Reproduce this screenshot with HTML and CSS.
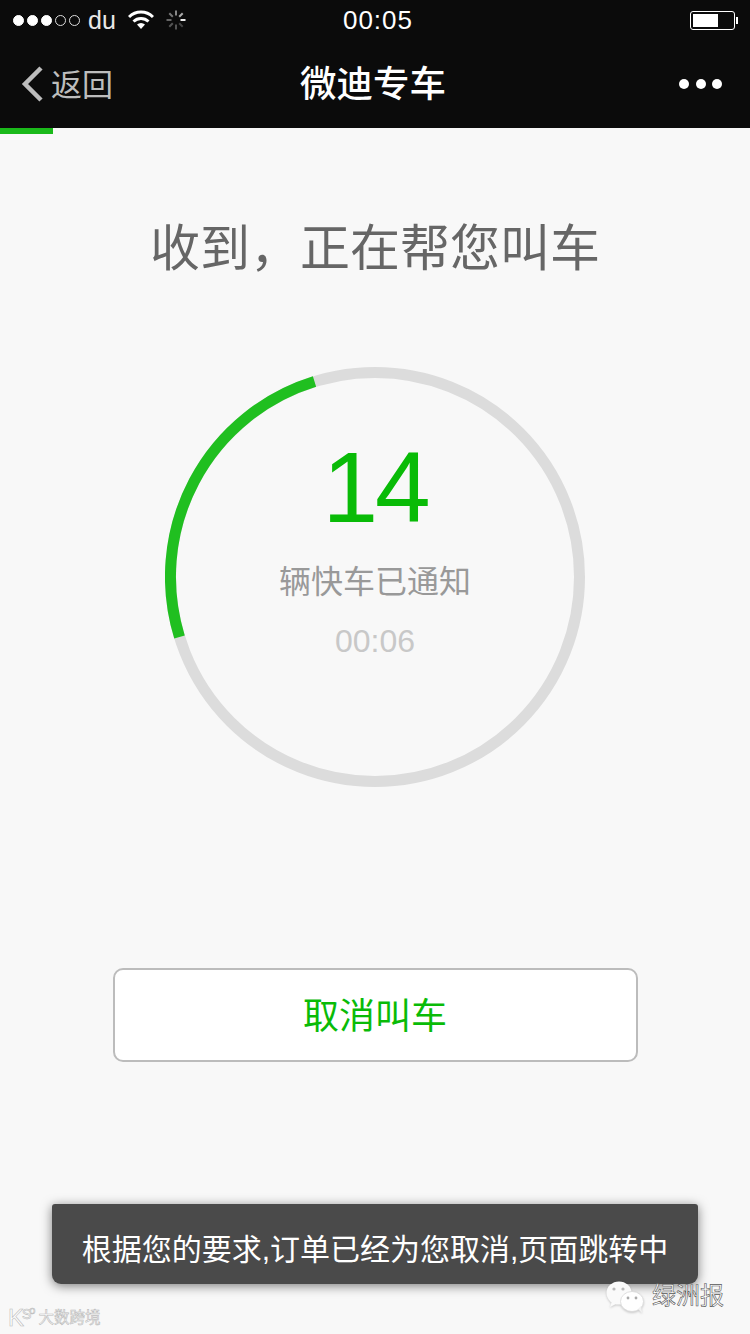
FILE: index.html
```html
<!DOCTYPE html>
<html lang="zh-CN">

<head>
    <meta charset="UTF-8">
    <meta name="viewport" content="width=device-width, initial-scale=1.0">
    <title>微迪专车</title>
    <link rel="stylesheet" href="styles.css">
</head>

<body>
    <div class="phone">
        <!-- Status bar -->
        <div class="status-bar">
            <div class="status-left">
                <div class="signal">
                    <span class="dot on"></span>
                    <span class="dot on"></span>
                    <span class="dot on"></span>
                    <span class="dot"></span>
                    <span class="dot"></span>
                </div>
                <span class="carrier">du</span>
                <svg class="wifi" width="26" height="20" viewBox="0 0 26 20">
                    <path d="M1 7 A17 17 0 0 1 25 7" fill="none" stroke="#fff" stroke-width="3" />
                    <path d="M5.5 11.5 A11 11 0 0 1 20.500 11.500" fill="none" stroke="#fff" stroke-width="3" />
                    <path d="M9 14.5 A6 6 0 0 1 17 14.500 L13 19 Z" fill="#fff" />
                </svg>
                <svg class="spinner" width="20" height="20" viewBox="0 0 20 20" stroke-width="2">
                    <path d="M10 0.500 V5.500" stroke="#888" />
                    <path d="M16.700 3.300 L13.200 6.800" stroke="#aaa" />
                    <path d="M19.500 10 H14.500" stroke="#eee" />
                    <path d="M16.700 16.700 L13.200 13.200" stroke="#444" />
                    <path d="M10 19.500 V14.500" stroke="#555" />
                    <path d="M3.300 16.700 L6.800 13.200" stroke="#555" />
                    <path d="M0.500 10 H5.500" stroke="#666" />
                    <path d="M3.300 3.300 L6.800 6.800" stroke="#777" />
                </svg>
            </div>
            <div class="clock">00:05</div>
            <div class="battery">
                <div class="battery-body">
                    <div class="battery-level"></div>
                </div>
                <div class="battery-nub"></div>
            </div>
        </div>

        <!-- Navigation bar -->
        <div class="nav-bar">
            <div class="back">
                <svg width="24" height="36" viewBox="0 0 24 36">
                    <path d="M20 2 L4 18 L20 34" fill="none" stroke="#bdbdbd" stroke-width="4.500" />
                </svg>
                <span class="back-text">返回</span>
            </div>
            <div class="nav-title">微迪专车</div>
            <div class="more">
                <span></span>
                <span></span>
                <span></span>
            </div>
        </div>
        <div class="progress">
            <div class="progress-fill"></div>
        </div>

        <!-- Main content -->
        <h1 class="headline">收到，正在帮您叫车</h1>

        <div class="ring">
            <svg class="ring-art" width="420" height="420" viewBox="0 0 420 420">
                <circle cx="210" cy="210" r="204.500" fill="none" stroke="#dcdcdc" stroke-width="11" />
                <path d="M14.500 270 A204.500 204.500 0 0 1 149.500 14.500" fill="none" stroke="#20bf20" stroke-width="11" />
            </svg>
            <div class="count">14</div>
            <div class="count-label">辆快车已通知</div>
            <div class="elapsed">00:06</div>
        </div>

        <button class="cancel-btn">取消叫车</button>

        <!-- Toast -->
        <div class="toast">根据您的要求,订单已经为您取消,页面跳转中</div>

        <!-- Watermarks -->
        <div class="mark-left">
            <span class="mark-logo">K<span class="mark-s">S</span><span class="mark-o">o</span></span>
            <span class="mark-name">大数跨境</span>
        </div>
        <div class="mark-right">
            <svg class="mark-icon" width="38" height="32" viewBox="0 0 38 32">
                <ellipse cx="13" cy="12" rx="12.500" ry="11.500" fill="#fafafa" />
                <path d="M6 20 L4 26 L12 22 Z" fill="#fafafa" />
                <ellipse cx="26" cy="20.500" rx="11.500" ry="10" fill="#fff" stroke="#d8d8d8" stroke-width="0.800" />
                <path d="M32 28 L36 32 L35 25 Z" fill="#f2f2f2" />
                <circle cx="8" cy="8" r="1.600" fill="#bbb" />
                <circle cx="17" cy="8" r="1.600" fill="#bbb" />
                <circle cx="22" cy="17" r="1.400" fill="#aaa" />
                <circle cx="30" cy="17" r="1.400" fill="#aaa" />
            </svg>
            <span class="mark-title">绿洲报</span>
        </div>
    </div>
</body>

</html>
```

FILE: styles.css
```css
/* Basic page setup */
html,
body {
    margin: 0;
    padding: 0;
}

body {
    font-family: "Liberation Sans", "Noto Sans CJK SC", sans-serif;
    background-color: #f8f8f8;
}

.phone {
    position: relative;
    width: 750px;
    height: 1334px;
    overflow: hidden;
    display: flex;
    flex-direction: column;
    align-items: center;
}

/* Status bar */
.status-bar {
    width: 100%;
    height: 40px;
    box-sizing: border-box;
    padding: 0 12px 0 13px;
    background-color: #0b0b0b;
    color: #fff;
    display: grid;
    grid-template-columns: 1fr auto 1fr;
    align-items: center;
}

.status-left {
    display: flex;
    align-items: center;
}

.signal {
    display: flex;
    gap: 3px;
}

.dot {
    width: 11px;
    height: 11px;
    box-sizing: border-box;
    border: 1px solid #ddd;
    border-radius: 50%;
}

.dot.on {
    background-color: #fff;
    border-color: #fff;
}

.carrier {
    font-size: 25px;
    margin-left: 8px;
    color: #e8e8e8;
}

.wifi {
    margin-left: 12px;
}

.spinner {
    margin-left: 12px;
}

.clock {
    font-size: 26px;
    letter-spacing: 1px;
    margin-left: 5px;
}

.battery {
    justify-self: end;
    display: flex;
    align-items: center;
    gap: 1px;
}

.battery-body {
    width: 45px;
    height: 19px;
    box-sizing: border-box;
    padding: 2px;
    border: 1px solid #fff;
    border-radius: 3px;
}

.battery-level {
    width: 25px;
    height: 100%;
    background-color: #fff;
}

.battery-nub {
    width: 2px;
    height: 7px;
    background-color: #fff;
}

/* Navigation bar */
.nav-bar {
    width: 100%;
    height: 88px;
    box-sizing: border-box;
    padding: 0 28px 0 21px;
    background-color: #0b0b0b;
    display: grid;
    grid-template-columns: 1fr auto 1fr;
    align-items: center;
}

.back {
    display: flex;
    align-items: center;
    gap: 6px;
    font-size: 31px;
    color: #bdbdbd;
}

.back-text {
    padding-bottom: 4px;
}

.nav-title {
    font-size: 36.500px;
    font-weight: 500;
    color: #fff;
    margin-left: 3px;
    padding-bottom: 6px;
}

.more {
    justify-self: end;
    display: flex;
    gap: 6.500px;
}

.more span {
    width: 10px;
    height: 10px;
    border-radius: 50%;
    background-color: #fff;
}

.progress {
    width: 100%;
    height: 6px;
}

.progress-fill {
    width: 53px;
    height: 100%;
    background-color: #1ab91a;
}

/* Main content */
.headline {
    margin: 82px 0 0;
    height: 66px;
    line-height: 66px;
    font-size: 50px;
    font-weight: 400;
    color: #666;
}

.ring {
    position: relative;
    width: 420px;
    height: 420px;
    margin-top: 85px;
    box-sizing: border-box;
    padding-top: 55px;
    display: flex;
    flex-direction: column;
    align-items: center;
}

.ring-art {
    position: absolute;
    top: 0;
    left: 0;
}

.count {
    height: 130px;
    line-height: 130px;
    font-size: 100px;
    letter-spacing: -3px;
    color: #09bb07;
}

.count-label {
    margin-top: 8px;
    height: 44px;
    line-height: 44px;
    font-size: 32px;
    color: #999;
}

.elapsed {
    margin-top: 15px;
    height: 44px;
    line-height: 44px;
    font-size: 32px;
    color: #c8c8c8;
}

.cancel-btn {
    width: 525px;
    height: 94px;
    margin-top: 181px;
    padding: 0 0 4px;
    box-sizing: border-box;
    border: 2px solid #bcbcbc;
    border-radius: 10px;
    background-color: #fff;
    font-family: inherit;
    font-size: 36px;
    color: #09bb07;
}

/* Toast */
.toast {
    position: absolute;
    left: 52px;
    top: 1204px;
    width: 646px;
    height: 80px;
    line-height: 92px;
    text-align: center;
    border-radius: 3px 3px 9px 9px;
    background-color: #4a4a4a;
    box-shadow: 0 2px 11px rgba(0, 0, 0, 0.5);
    font-size: 30px;
    color: #fff;
}

/* Watermarks */
.mark-left {
    position: absolute;
    left: 8px;
    top: 1305px;
    height: 26px;
    display: flex;
    align-items: center;
    gap: 5px;
    color: #fff;
    -webkit-text-stroke: 0.600px #bbb;
}

.mark-logo {
    display: flex;
    align-items: flex-start;
    font-size: 24px;
    line-height: 26px;
    letter-spacing: -2px;
}

.mark-s {
    font-size: 14px;
    line-height: 18px;
}

.mark-o {
    font-size: 11px;
    line-height: 10px;
}

.mark-name {
    font-size: 15.500px;
    line-height: 26px;
}

.mark-right {
    position: absolute;
    left: 606px;
    top: 1281px;
    display: flex;
    align-items: flex-start;
    gap: 8px;
    font-size: 24px;
    line-height: 28px;
    color: #fff;
    -webkit-text-stroke: 0.600px #555;
}

.mark-title {
    padding-top: 1px;
}

.mark-icon {
    filter: drop-shadow(0 1px 1px rgba(0, 0, 0, 0.2));
}
```
